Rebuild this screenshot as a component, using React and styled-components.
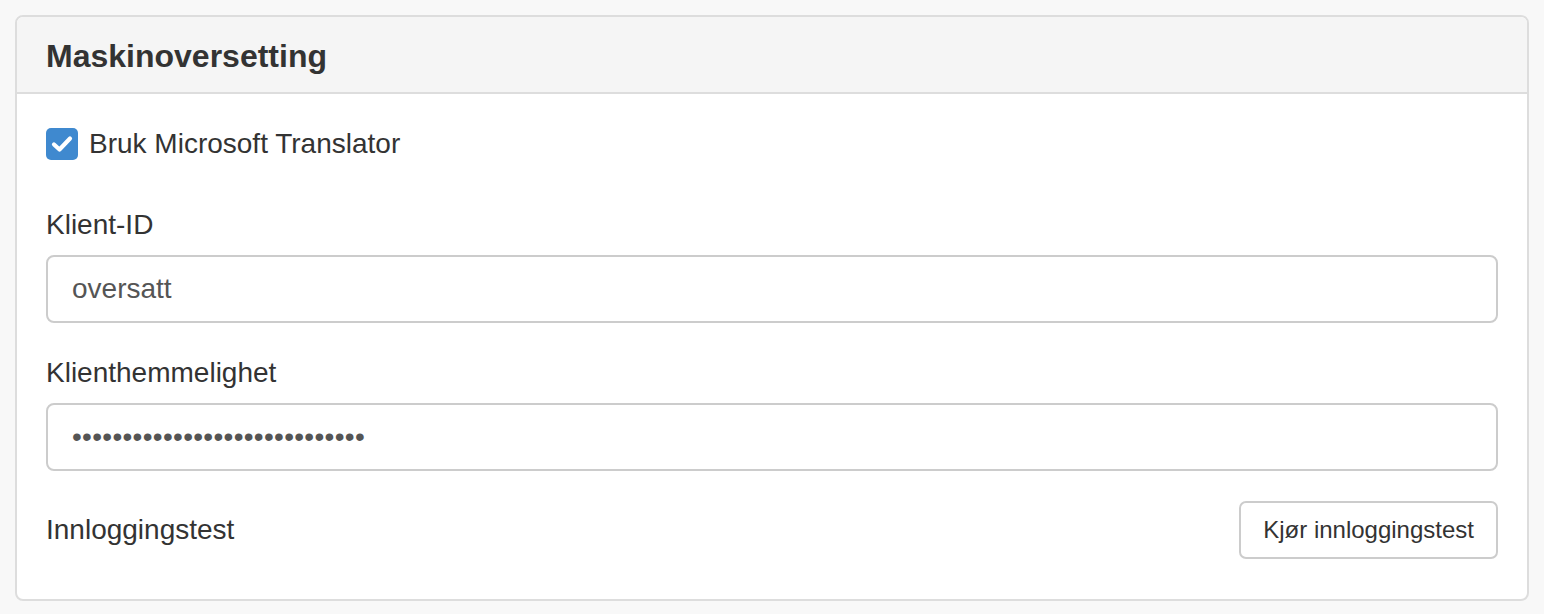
import React from "react";
import styled, { createGlobalStyle } from "styled-components";

const GlobalStyle = createGlobalStyle`
  html, body {
    margin: 0;
    padding: 0;
    background: #f8f8f8;
    font-family: "Liberation Sans", Arial, Helvetica, sans-serif;
    color: #333;
  }
  * { box-sizing: border-box; }
`;

const Page = styled.div`
  padding: 15px 15px 0 15px;
`;

const Panel = styled.section`
  background: #fff;
  border: 2px solid #ddd;
  border-radius: 8px;
  overflow: hidden;
`;

const PanelHeading = styled.header`
  background: #f5f5f5;
  border-bottom: 2px solid #ddd;
  padding: 23px 29px 19px 29px;
  height: 77px;
  display: flex;
  align-items: center;
`;

const PanelTitle = styled.h3`
  margin: 0;
  font-size: 32px;
  font-weight: bold;
  line-height: 35px;
  color: #333;
`;

const PanelBody = styled.div`
  padding: 30px 29px 40px 29px;
  display: flex;
  flex-direction: column;
`;

const CheckRow = styled.label`
  display: flex;
  align-items: center;
  gap: 11px;
  height: 40px;
  font-size: 28px;
  line-height: 40px;
  cursor: pointer;
`;

const CheckBox = styled.span`
  width: 32px;
  height: 32px;
  border-radius: 5px;
  background: #3f89cf;
  display: inline-flex;
  align-items: center;
  justify-content: center;
  flex-shrink: 0;
`;

const FormGroup = styled.div`
  display: flex;
  flex-direction: column;
  margin-top: ${(p) => p.$top}px;
`;

const Label = styled.label`
  font-size: 28px;
  line-height: 40px;
  margin-bottom: 10px;
  color: #333;
`;

const Input = styled.input`
  height: 68px;
  width: 100%;
  border: 2px solid #ccc;
  border-radius: 8px;
  padding: 0 24px;
  font-family: "Liberation Sans", Arial, sans-serif;
  font-size: 28px;
  color: #555;
  background: #fff;
  outline: none;
  letter-spacing: ${(p) => (p.type === "password" ? "0.3px" : "normal")};
`;

const TestRow = styled.div`
  display: flex;
  align-items: center;
  justify-content: space-between;
  margin-top: 30px;
`;

const RowLabel = styled.span`
  font-size: 28px;
  line-height: 40px;
`;

const Button = styled.button`
  height: 58px;
  padding: 0 22px;
  border: 2px solid #ccc;
  border-radius: 7px;
  background: #fff;
  color: #333;
  font-family: "Liberation Sans", Arial, sans-serif;
  font-size: 24px;
  cursor: pointer;
`;

export default function App() {
  return (
    <>
      <GlobalStyle />
      <Page>
        <Panel>
          <PanelHeading>
            <PanelTitle>Maskinoversetting</PanelTitle>
          </PanelHeading>
          <PanelBody>
            <CheckRow>
              <CheckBox>
                <svg width="22" height="18" viewBox="0 0 22 18">
                  <path
                    d="M3 9.5 L8.5 14.5 L19 3.5"
                    fill="none"
                    stroke="#fff"
                    strokeWidth="4.2"
                    strokeLinecap="round"
                    strokeLinejoin="round"
                  />
                </svg>
              </CheckBox>
              Bruk Microsoft Translator
            </CheckRow>
            <FormGroup $top={41}>
              <Label htmlFor="cid">Klient-ID</Label>
              <Input id="cid" type="text" defaultValue="oversatt" />
            </FormGroup>
            <FormGroup $top={30}>
              <Label htmlFor="csec">Klienthemmelighet</Label>
              <Input
                id="csec"
                type="password"
                defaultValue="abcdefghijklmnopqrstuvwxyzabc"
              />
            </FormGroup>
            <TestRow>
              <RowLabel>Innloggingstest</RowLabel>
              <Button type="button">Kjør innloggingstest</Button>
            </TestRow>
          </PanelBody>
        </Panel>
      </Page>
    </>
  );
}
